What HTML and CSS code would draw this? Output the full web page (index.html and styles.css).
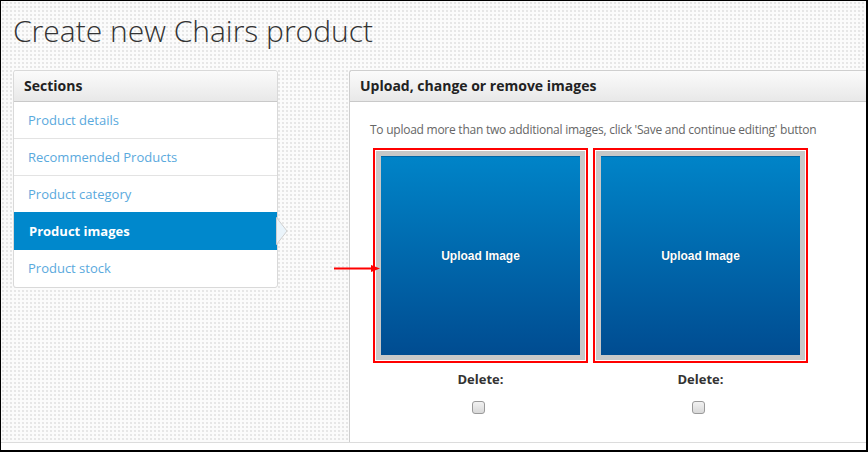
FILE: index.html
```html
<!DOCTYPE html>
<html lang="en">

<head>
    <meta charset="UTF-8">
    <meta name="viewport" content="width=device-width, initial-scale=1.0">
    <title>Create new Chairs product</title>
    <link rel="stylesheet" href="styles.css">
</head>

<body>
    <div class="frame">
        <h1 class="page-title">Create new Chairs product</h1>

        <div class="content">
            <div class="sections">
                <div class="box-head">Sections</div>
                <ul class="section-list">
                    <li><a href="#">Product details</a></li>
                    <li><a href="#">Recommended Products</a></li>
                    <li><a href="#">Product category</a></li>
                    <li class="active">
                        <a href="#">Product images</a>
                        <svg class="pointer" width="12" height="28" viewBox="0 0 12 28">
                            <polygon points="0.5,0.5 11,14 0.5,27.5" fill="#eaf4fb" stroke="#cfcfcf" />
                        </svg>
                    </li>
                    <li><a href="#">Product stock</a></li>
                </ul>
            </div>

            <div class="panel">
                <div class="box-head">Upload, change or remove images</div>
                <div class="panel-body">
                    <p class="hint">To upload more than two additional images, click 'Save and continue editing' button</p>
                    <div class="uploads">
                        <div class="upload">
                            <div class="upload-frame">
                                <div class="upload-btn">Upload Image</div>
                            </div>
                            <div class="delete-label">Delete:</div>
                            <input type="checkbox" class="check">
                        </div>
                        <div class="upload">
                            <div class="upload-frame">
                                <div class="upload-btn">Upload Image</div>
                            </div>
                            <div class="delete-label">Delete:</div>
                            <input type="checkbox" class="check">
                        </div>
                    </div>
                </div>
            </div>
        </div>

        <div class="footer"></div>

        <!-- annotation arrow drawn over the page -->
        <svg class="red-arrow" width="48" height="10" viewBox="0 0 48 10">
            <line x1="0" y1="4.5" x2="40" y2="4.5" stroke="#ff0000" stroke-width="2" />
            <polygon points="37,1 46,4.5 37,8" fill="#ff0000" />
        </svg>
    </div>
</body>

</html>
```

FILE: styles.css
```css
* {
    box-sizing: border-box;
}

body {
    margin: 0;
    padding: 0;
    font-family: "Open Sans", "Liberation Sans", sans-serif;
    color: #333;
}

.frame {
    position: relative;
    width: 868px;
    height: 452px;
    display: flex;
    flex-direction: column;
    overflow: hidden;
    border-style: solid;
    border-color: #000;
    border-width: 1px 2px 2px 1px;
    background-color: #fbfbfb;
    background-image: radial-gradient(circle, #e6e6e6 0.7px, transparent 1px);
    background-size: 4px 4px;
}

.page-title {
    margin: 12px 0 21px 12px;
    font-size: 30px;
    font-weight: 300;
    line-height: 36px;
    color: #333;
}

.content {
    flex: 1;
    display: flex;
    align-items: stretch;
    padding-left: 12px;
}

/* shared grey header of both boxes */
.box-head {
    height: 31px;
    line-height: 30px;
    padding-left: 10px;
    font-size: 14px;
    font-weight: 700;
    color: #222;
    background: linear-gradient(#fbfbfb, #e8e8e8);
    border-bottom: 1px solid #c9c9c9;
    border-radius: 3px 3px 0 0;
}

.sections {
    width: 265px;
    align-self: flex-start;
    border: 1px solid #d9d9d9;
    border-radius: 3px;
    background: #fff;
}

.section-list {
    list-style: none;
    margin: 0;
    padding: 0;
}

.section-list li {
    position: relative;
    height: 37px;
    border-bottom: 1px solid #e3e3e3;
}

.section-list li:last-child {
    border-bottom: none;
}

.section-list a {
    display: block;
    padding-left: 14px;
    line-height: 36px;
    font-size: 13px;
    color: #5aa9dd;
    text-decoration: none;
}

.section-list li.active {
    background: #0088cc;
    margin-top: -1px;
    height: 38px;
    border-bottom: none;
}

.section-list li.active a {
    padding-left: 15px;
    line-height: 38px;
    color: #fff;
    font-weight: 700;
}

.pointer {
    position: absolute;
    right: -11px;
    top: 5px;
}

.panel {
    flex: 1;
    margin-left: 71px;
    border: 1px solid #cfcfcf;
    border-right: none;
    border-bottom: none;
    border-radius: 3px 0 0 0;
    background: #fff;
}

.panel-body {
    padding: 19px 0 0 20px;
}

.hint {
    margin: 0;
    font-size: 12px;
    letter-spacing: -0.25px;
    line-height: 18px;
    color: #666;
}

.uploads {
    display: flex;
    gap: 5px;
    margin-top: 9px;
    padding-left: 3px;
}

.upload {
    width: 215px;
    display: flex;
    flex-direction: column;
    align-items: center;
}

.upload-frame {
    width: 215px;
    height: 215px;
    border: 2px solid #ff0000;
    padding: 1px;
    background: #fff;
}

.upload-btn {
    width: 100%;
    height: 100%;
    display: flex;
    align-items: center;
    justify-content: center;
    border: 5px solid #c8c8c8;
    background: linear-gradient(#0084c8, #004c91);
    box-shadow: inset 0 1px 0 #0066a6;
    font-family: "Liberation Sans", Arial, sans-serif;
    font-size: 12px;
    font-weight: 700;
    color: #fff;
    text-shadow: 0 0 1px rgba(0, 0, 0, 0.3);
}

.delete-label {
    margin-top: 6px;
    font-size: 13px;
    font-weight: 700;
    line-height: 20px;
    color: #333;
}

.check {
    appearance: none;
    -webkit-appearance: none;
    width: 13px;
    height: 13px;
    margin: 12px 0 0 -4px;
    border: 1px solid #9a9a9a;
    border-radius: 3px;
    background: linear-gradient(#f2f2f2, #d8d8d8);
}

.footer {
    height: 8px;
    border-top: 1px solid #dcdcdc;
    background: #fff;
}

.red-arrow {
    position: absolute;
    left: 333px;
    top: 263px;
}
```
